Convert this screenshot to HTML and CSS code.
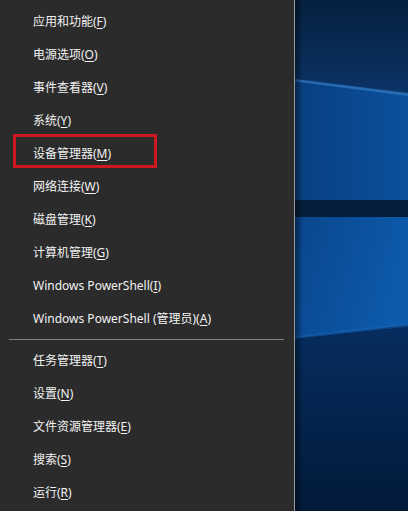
FILE: index.html
```html
<!DOCTYPE html>
<html lang="zh-CN">
<head>
    <meta charset="UTF-8">
    <meta name="viewport" content="width=device-width, initial-scale=1.0">
    <title>Win+X 菜单</title>
    <link rel="stylesheet" href="styles.css">
</head>
<body>
    <div class="menu">
        <div class="item">应用和功能(<u>F</u>)</div>
        <div class="item">电源选项(<u>O</u>)</div>
        <div class="item">事件查看器(<u>V</u>)</div>
        <div class="item">系统(<u>Y</u>)</div>
        <div class="item marked">设备管理器(<u>M</u>)</div>
        <div class="item">网络连接(<u>W</u>)</div>
        <div class="item">磁盘管理(<u>K</u>)</div>
        <div class="item">计算机管理(<u>G</u>)</div>
        <div class="item">Windows PowerShell(<u>I</u>)</div>
        <div class="item">Windows PowerShell (管理员)(<u>A</u>)</div>
        <div class="sep"></div>
        <div class="item">任务管理器(<u>T</u>)</div>
        <div class="item">设置(<u>N</u>)</div>
        <div class="item">文件资源管理器(<u>E</u>)</div>
        <div class="item">搜索(<u>S</u>)</div>
        <div class="item">运行(<u>R</u>)</div>
    </div>

    <div class="desktop">
        <!-- 桌面壁纸 -->
        <svg viewBox="0 0 113 511" preserveAspectRatio="none">
            <defs>
                <linearGradient id="top" x1="0" y1="0" x2="0" y2="1">
                    <stop offset="0" stop-color="#05203f"/>
                    <stop offset="1" stop-color="#0b3466"/>
                </linearGradient>
                <linearGradient id="panel1" x1="0" y1="0" x2="1" y2="0">
                    <stop offset="0" stop-color="#093f80"/>
                    <stop offset="1" stop-color="#0b509c"/>
                </linearGradient>
                <linearGradient id="panel2" x1="0" y1="0" x2="1" y2="0.3">
                    <stop offset="0" stop-color="#09468c"/>
                    <stop offset="1" stop-color="#0d5aab"/>
                </linearGradient>
                <linearGradient id="bottom" x1="0" y1="0" x2="0" y2="1">
                    <stop offset="0" stop-color="#062d5e"/>
                    <stop offset="1" stop-color="#021a3a"/>
                </linearGradient>
                <linearGradient id="shade" x1="0" y1="0" x2="1" y2="0">
                    <stop offset="0" stop-color="#000" stop-opacity="0.45"/>
                    <stop offset="1" stop-color="#000" stop-opacity="0"/>
                </linearGradient>
            </defs>
            <rect x="0" y="0" width="113" height="511" fill="url(#bottom)"/>
            <polygon points="0,0 113,0 113,94 0,80" fill="url(#top)"/>
            <polygon points="0,80 113,94 113,200 0,200" fill="url(#panel1)"/>
            <polygon points="0,79 113,93 113,96 0,81.5" fill="#2f78c2" opacity="0.75"/>
            <rect x="0" y="200" width="113" height="17" fill="#061e3c"/>
            <polygon points="0,217 113,217 113,325 0,338" fill="url(#panel2)"/>
            <polygon points="0,336 113,323 113,327 0,339" fill="#1663b8" opacity="0.5"/>
            <polygon points="0,339 113,327 113,511 0,511" fill="url(#bottom)"/>
            <rect x="0" y="0" width="8" height="511" fill="url(#shade)"/>
        </svg>
    </div>
</body>
</html>
```

FILE: styles.css
```css
body {
    margin: 0;
    display: flex;
    height: 511px;
    overflow: hidden;
    background-color: #2b2b2b;
    font-family: 'Noto Sans', 'Noto Sans CJK SC', sans-serif;
}

.menu {
    width: 294px;
    flex-shrink: 0;
    padding-top: 5px;
    background-color: #2b2b2b;
    border-right: 1px solid #9a9a9a;
    box-sizing: content-box;
}

.item {
    height: 33px;
    line-height: 33px;
    padding-left: 33px;
    font-size: 12px;
    color: #f2f2f2;
    white-space: nowrap;
    position: relative;
}

.item u {
    text-underline-offset: 2px;
}

/* marco rojo de la captura */
.item.marked::after {
    content: '';
    position: absolute;
    left: 13px;
    top: -3px;
    width: 138px;
    height: 28px;
    border: 3px solid #cc1820;
}

.sep {
    height: 1px;
    margin: 4px 10px 4px 9px;
    background-color: #808080;
}

.desktop {
    flex: 1;
    height: 511px;
}

.desktop svg {
    display: block;
    width: 100%;
    height: 100%;
}
```
